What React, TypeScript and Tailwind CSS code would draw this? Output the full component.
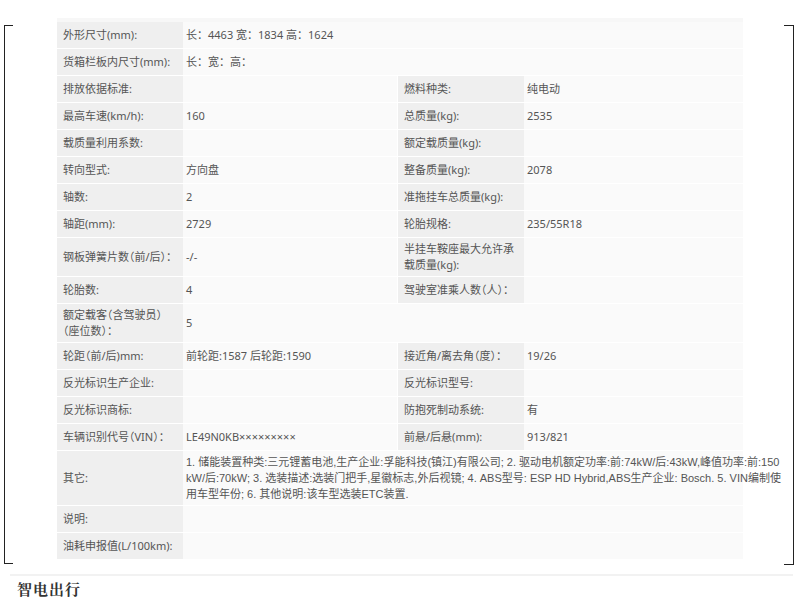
type Cell = { label: string; value?: string };
type Row = { left: Cell; right?: Cell; wide?: boolean };

const ROWS: Row[] = [
  { left: { label: "外形尺寸(mm):", value: "长：4463 宽：1834 高：1624" }, wide: true },
  { left: { label: "货箱栏板内尺寸(mm):", value: "长：宽：高：" }, wide: true },
  { left: { label: "排放依据标准:" }, right: { label: "燃料种类:", value: "纯电动" } },
  { left: { label: "最高车速(km/h):", value: "160" }, right: { label: "总质量(kg):", value: "2535" } },
  { left: { label: "载质量利用系数:" }, right: { label: "额定载质量(kg):" } },
  { left: { label: "转向型式:", value: "方向盘" }, right: { label: "整备质量(kg):", value: "2078" } },
  { left: { label: "轴数:", value: "2" }, right: { label: "准拖挂车总质量(kg):" } },
  { left: { label: "轴距(mm):", value: "2729" }, right: { label: "轮胎规格:", value: "235/55R18" } },
  { left: { label: "钢板弹簧片数（前/后）：", value: "-/-" }, right: { label: "半挂车鞍座最大允许承载质量(kg):" } },
  { left: { label: "轮胎数:", value: "4" }, right: { label: "驾驶室准乘人数（人）：" } },
  { left: { label: "额定载客（含驾驶员）\n（座位数）：", value: "5" }, wide: true },
  { left: { label: "轮距（前/后)mm:", value: "前轮距:1587 后轮距:1590" }, right: { label: "接近角/离去角（度）：", value: "19/26" } },
  { left: { label: "反光标识生产企业:" }, right: { label: "反光标识型号:" } },
  { left: { label: "反光标识商标:" }, right: { label: "防抱死制动系统:", value: "有" } },
  { left: { label: "车辆识别代号（VIN）：", value: "LE49N0KB×××××××××" }, right: { label: "前悬/后悬(mm):", value: "913/821" } },
  {
    left: {
      label: "其它:",
      value:
        "1. 储能装置种类:三元锂蓄电池,生产企业:孚能科技(镇江)有限公司; 2. 驱动电机额定功率:前:74kW/后:43kW,峰值功率:前:150\nkW/后:70kW; 3. 选装描述:选装门把手,星徽标志,外后视镜; 4. ABS型号: ESP HD Hybrid,ABS生产企业: Bosch. 5. VIN编制使\n用车型年份; 6. 其他说明:该车型选装ETC装置.",
    },
    wide: true,
  },
  { left: { label: "说明:" }, wide: true },
  { left: { label: "油耗申报值(L/100km):" }, wide: true },
];

const label =
  "flex items-center bg-[#efefef] px-[6px] py-[3px] min-h-[26px] whitespace-pre-line [font-feature-settings:'halt']";
const value = "flex items-center bg-[#fafafa] px-[3px] py-[3px] min-h-[26px]";

export default function App() {
  return (
    <div
      className="h-[600px] w-[800px] overflow-hidden bg-white text-[11px] leading-[16px] text-[#555]"
      style={{ fontFamily: '"Noto Sans", "Noto Sans CJK SC", sans-serif' }}
    >
      <div className="flex items-start pt-[18px]">
        <div className="ml-[4px] mt-[7px] h-[539px] w-[9px] border-y border-l border-[#222]" />
        <div className="ml-[44px] w-[686px] border-t-[4px] border-[#f7f7f7]">
          <div className="flex flex-col gap-px">
            {ROWS.map((row, i) => (
              <div key={i} className="grid grid-cols-[126px_215px_126px_219px]">
                <div className={label}>{row.left.label}</div>
                {row.wide ? (
                  <div
                    className={`${value} col-span-3 whitespace-pre ${
                      i === 15 ? "font-['Liberation_Sans','Noto_Sans_CJK_SC',sans-serif]" : ""
                    }`}
                  >
                    {row.left.value}
                  </div>
                ) : (
                  <>
                    <div className={`${value} mr-[1px]`}>{row.left.value}</div>
                    <div className={`${label} pr-[4px]`}>{row.right?.label}</div>
                    <div className={value}>{row.right?.value}</div>
                  </>
                )}
              </div>
            ))}
          </div>
        </div>
        <div className="ml-auto mr-[6px] mt-[7px] h-[540px] w-[10px] border-y border-r border-[#222]" />
      </div>
      <div className="ml-[10px] mt-[9px] h-[2px] w-[783px] bg-[#f2f2f2]" />
      <div
        className="ml-[17px] mt-[5px] text-[15px] font-bold tracking-[1px] text-[#333]"
        style={{ fontFamily: '"Noto Serif CJK SC", "Noto Sans CJK SC", serif' }}
      >
        智电出行
      </div>
    </div>
  );
}
